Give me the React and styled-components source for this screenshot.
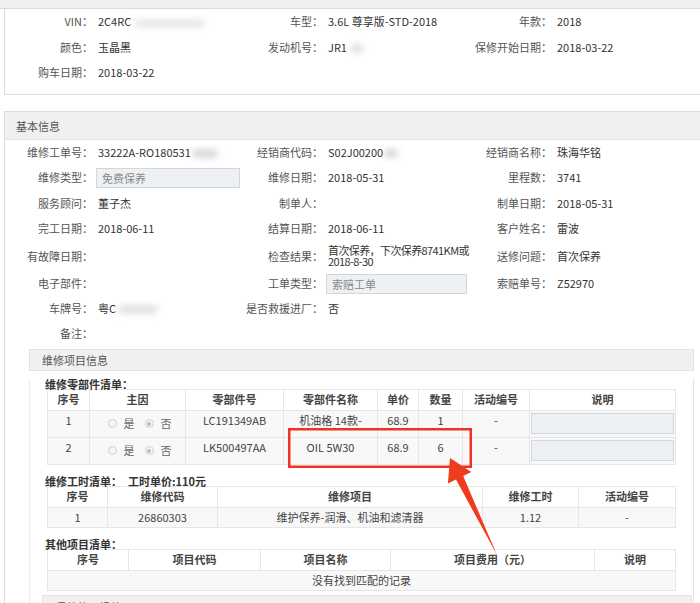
import React from 'react';
import styled, { createGlobalStyle } from 'styled-components';

const Global = createGlobalStyle`
  html, body { margin: 0; padding: 0; background: #fff; }
  body {
    font-family: "Noto Sans CJK SC", "Noto Sans", "Liberation Sans", sans-serif;
    font-size: 11px;
    color: #333;
  }
  #root { width: 700px; height: 603px; overflow: hidden; }
  * { box-sizing: border-box; }
`;

const Page = styled.div`
  position: relative;
  width: 700px;
  height: 603px;
  overflow: hidden;
  background: #fff;
`;

const TopStrip = styled.div`
  height: 9px;
  background: #efefef;
  border-bottom: 1px solid #dadada;
`;

const Panel = styled.section`
  margin: ${(p) => p.$mt || 0}px -20px 0 4px;
  border: 1px solid #dcdcdc;
  border-right: none;
  border-top: ${(p) => (p.$noTop ? 'none' : '1px solid #dcdcdc')};
  padding-bottom: ${(p) => p.$pb || 0}px;
`;

const PanelHead = styled.div`
  height: 28px;
  line-height: 28px;
  padding-left: 11px;
  background: #f0f0f0;
  border-bottom: 1px solid #e2e2e2;
  color: #555;
`;

const FieldRow = styled.div`
  display: grid;
  grid-template-columns: 88px 147px 83px 147px 82px 1fr;
  align-items: center;
  min-height: ${(p) => p.$h || 25}px;
`;

const Label = styled.div`
  text-align: right;
  color: #555;
  white-space: nowrap;
  line-height: 13px;
`;

const Value = styled.div`
  padding-left: 5px;
  color: #333;
  white-space: nowrap;
  line-height: ${(p) => p.$lh || 13}px;
  letter-spacing: ${(p) => p.$ls || 0}px;
`;

const Smudge = styled.span`
  display: inline-block;
  vertical-align: middle;
  width: ${(p) => p.$w}px;
  height: 9px;
  margin-left: ${(p) => p.$ml || 0}px;
  border-radius: 5px;
  background: rgba(160, 160, 160, ${(p) => p.$a || 0.35});
  filter: blur(3px);
`;

const ReadInput = styled.div`
  width: ${(p) => p.$w}px;
  height: 20px;
  margin-left: -2px;
  padding-left: 5px;
  line-height: 18px;
  background: #eef1f4;
  border: 1px solid #d2d6db;
  color: #888;
`;

const InnerPanel = styled.section`
  width: 665px;
  margin: 3px 0 0 24px;
`;

const InnerHead = styled.div`
  height: 22px;
  line-height: 21px;
  padding-left: 12px;
  background: #f0f0f0;
  border: 1px solid #e3e3e3;
  color: #555;
`;

const InnerBody = styled.div`
  border-left: 1px solid #ececec;
  border-right: 1px solid #e3e3e3;
  padding: 0 17px 0 17px;
`;

const Caption = styled.div`
  display: flex;
  gap: 6px;
  height: 10px;
  line-height: 10px;
  margin: ${(p) => p.$mt || 10}px 0 0 -2px;
  font-weight: 700;
  color: #333;
  white-space: nowrap;
`;

const Grid = styled.table`
  width: 628px;
  border-collapse: collapse;
  table-layout: fixed;
  border: 1px solid #e0e0e0;
`;

const Col = styled.col`
  width: ${(p) => p.$w}px;
`;

const Tr = styled.tr`
  height: ${(p) => p.$h}px;
`;

const Th = styled.th`
  padding: 0;
  border: 1px solid #e6e6e6;
  background: #fff;
  font-weight: 700;
  color: #444;
  text-align: center;
  line-height: 13px;
  white-space: nowrap;
`;

const Td = styled.td`
  padding: ${(p) => (p.$top ? '3px 0 0' : '0 1px')};
  border: 1px solid #e6e6e6;
  background: #f8f8f8;
  color: #444;
  text-align: center;
  vertical-align: ${(p) => (p.$top ? 'top' : 'middle')};
  line-height: 13px;
  white-space: nowrap;
  overflow: hidden;
`;

const RadioGroup = styled.div`
  display: flex;
  align-items: center;
  justify-content: center;
  padding-left: 4px;
  color: #666;
`;

const Radio = styled.span`
  width: 9px;
  height: 9px;
  border-radius: 50%;
  border: 1px solid #cfcfcf;
  background: #f5f5f5;
  margin-right: 7px;
  margin-left: ${(p) => (p.$second ? 10 : 0)}px;
  display: inline-flex;
  align-items: center;
  justify-content: center;
  &::after {
    content: '';
    width: 4px;
    height: 4px;
    border-radius: 50%;
    background: ${(p) => (p.$checked ? '#bdbdbd' : 'transparent')};
  }
`;

const DescBox = styled.div`
  height: 21px;
  background: #edf0f3;
  border: 1px solid #d3d7dc;
`;

const SubHead = styled.div`
  height: 22px;
  margin: 4px -16px 0 -5px;
  padding-left: 12px;
  line-height: 22px;
  background: #f0f0f0;
  border: 1px solid #e2e2e2;
  color: #555;
`;

const Overlay = styled.svg`
  position: absolute;
  left: 0;
  top: 0;
  pointer-events: none;
`;

const Field = ({ label, children, ...rest }) => (
  <>
    <Label>{label}</Label>
    <Value {...rest}>{children}</Value>
  </>
);

const parts = [
  { no: '1', code: 'LC191349AB', name: '机油格 14款-', price: '68.9', qty: '1' },
  { no: '2', code: 'LK500497AA', name: 'OIL 5W30', price: '68.9', qty: '6' },
];

export default function App() {
  return (
    <Page>
      <Global />
      <TopStrip />
      <Panel $noTop $pb={8}>
        <FieldRow $h={25.5}>
          <Field label="VIN：">2C4RC<Smudge $w={70} $ml={4} $a={0.25} /></Field>
          <Field label="车型：">3.6L 尊享版-STD-2018</Field>
          <Field label="年款：">2018</Field>
        </FieldRow>
        <FieldRow $h={25.5}>
          <Field label="颜色：">玉晶黑</Field>
          <Field label="发动机号：">JR1<Smudge $w={14} $ml={3} $a={0.3} /></Field>
          <Field label="保修开始日期：">2018-03-22</Field>
        </FieldRow>
        <FieldRow $h={25.5}>
          <Field label="购车日期：">2018-03-22</Field>
        </FieldRow>
      </Panel>

      <Panel $mt={16}>
        <PanelHead>基本信息</PanelHead>
        <FieldRow>
          <Field label="维修工单号：">33222A-RO180531<Smudge $w={26} $ml={1} $a={0.4} /></Field>
          <Field label="经销商代码：">S02J00200<Smudge $w={14} $ml={1} $a={0.4} /></Field>
          <Field label="经销商名称：">珠海华铭</Field>
        </FieldRow>
        <FieldRow $h={26}>
          <Label>维修类型：</Label>
          <Value><ReadInput $w={144}>免费保养</ReadInput></Value>
          <Field label="维修日期：">2018-05-31</Field>
          <Field label="里程数：">3741</Field>
        </FieldRow>
        <FieldRow>
          <Field label="服务顾问：">董子杰</Field>
          <Field label="制单人：" />
          <Field label="制单日期：">2018-05-31</Field>
        </FieldRow>
        <FieldRow>
          <Field label="完工日期：">2018-06-11</Field>
          <Field label="结算日期：">2018-06-11</Field>
          <Field label="客户姓名：">雷波</Field>
        </FieldRow>
        <FieldRow $h={31}>
          <Field label="有故障日期：" />
          <Field label="检查结果：" $lh={11} $ls={-0.6}>
            首次保养，下次保养8741KM或
            <br />
            2018-8-30
          </Field>
          <Field label="送修问题：">首次保养</Field>
        </FieldRow>
        <FieldRow $h={24}>
          <Field label="电子部件：" />
          <Label>工单类型：</Label>
          <Value><ReadInput $w={141}>索赔工单</ReadInput></Value>
          <Field label="索赔单号：">Z52970</Field>
        </FieldRow>
        <FieldRow>
          <Field label="车牌号：">粤C<Smudge $w={40} $ml={2} $a={0.3} /></Field>
          <Field label="是否救援进厂：">否</Field>
        </FieldRow>
        <FieldRow>
          <Field label="备注：" />
        </FieldRow>

        <InnerPanel>
          <InnerHead>维修项目信息</InnerHead>
          <InnerBody>
            <Caption $mt={8}>维修零部件清单：</Caption>
            <Grid>
              <colgroup>
                <Col $w={42} /><Col $w={96} /><Col $w={98} /><Col $w={94} />
                <Col $w={41} /><Col $w={44} /><Col $w={67} /><Col $w={146} />
              </colgroup>
              <thead>
                <Tr $h={21}>
                  <Th>序号</Th><Th>主因</Th><Th>零部件号</Th><Th>零部件名称</Th>
                  <Th>单价</Th><Th>数量</Th><Th>活动编号</Th><Th>说明</Th>
                </Tr>
              </thead>
              <tbody>
                {parts.map((r) => (
                  <Tr $h={27} key={r.no}>
                    <Td $top>{r.no}</Td>
                    <Td>
                      <RadioGroup>
                        <Radio />是<Radio $second $checked />否
                      </RadioGroup>
                    </Td>
                    <Td $top>{r.code}</Td>
                    <Td $top>{r.name}</Td>
                    <Td $top>{r.price}</Td>
                    <Td $top>{r.qty}</Td>
                    <Td $top>-</Td>
                    <Td><DescBox /></Td>
                  </Tr>
                ))}
              </tbody>
            </Grid>

            <Caption $mt={11}>
              <span>维修工时清单：</span>
              <span>工时单价:110元</span>
            </Caption>
            <Grid>
              <colgroup>
                <Col $w={60} /><Col $w={110} /><Col $w={265} /><Col $w={96} /><Col $w={97} />
              </colgroup>
              <thead>
                <Tr $h={21}>
                  <Th>序号</Th><Th>维修代码</Th><Th>维修项目</Th><Th>维修工时</Th><Th>活动编号</Th>
                </Tr>
              </thead>
              <tbody>
                <Tr $h={20}>
                  <Td>1</Td><Td>26860303</Td><Td>维护保养-润滑、机油和滤清器</Td><Td>1.12</Td><Td>-</Td>
                </Tr>
              </tbody>
            </Grid>

            <Caption $mt={11}>其他项目清单：</Caption>
            <Grid>
              <colgroup>
                <Col $w={81} /><Col $w={132} /><Col $w={130} /><Col $w={204} /><Col $w={81} />
              </colgroup>
              <thead>
                <Tr $h={21}>
                  <Th>序号</Th><Th>项目代码</Th><Th>项目名称</Th><Th>项目费用（元）</Th><Th>说明</Th>
                </Tr>
              </thead>
              <tbody>
                <Tr $h={20}>
                  <Td colSpan={5}>没有找到匹配的记录</Td>
                </Tr>
              </tbody>
            </Grid>

            <SubHead>保养使用规范</SubHead>
          </InnerBody>
        </InnerPanel>
      </Panel>

      <Overlay width="700" height="603" viewBox="0 0 700 603">
        <rect x="289.25" y="429.25" width="181.5" height="37.5" fill="none" stroke="#ee3322" strokeWidth="2.5" />
        <polygon
          points="450,458 471.3,472.1 463.2,476.1 497,555 456,479.5 447.9,483.5"
          fill="#f03c1e"
        />
      </Overlay>
    </Page>
  );
}
